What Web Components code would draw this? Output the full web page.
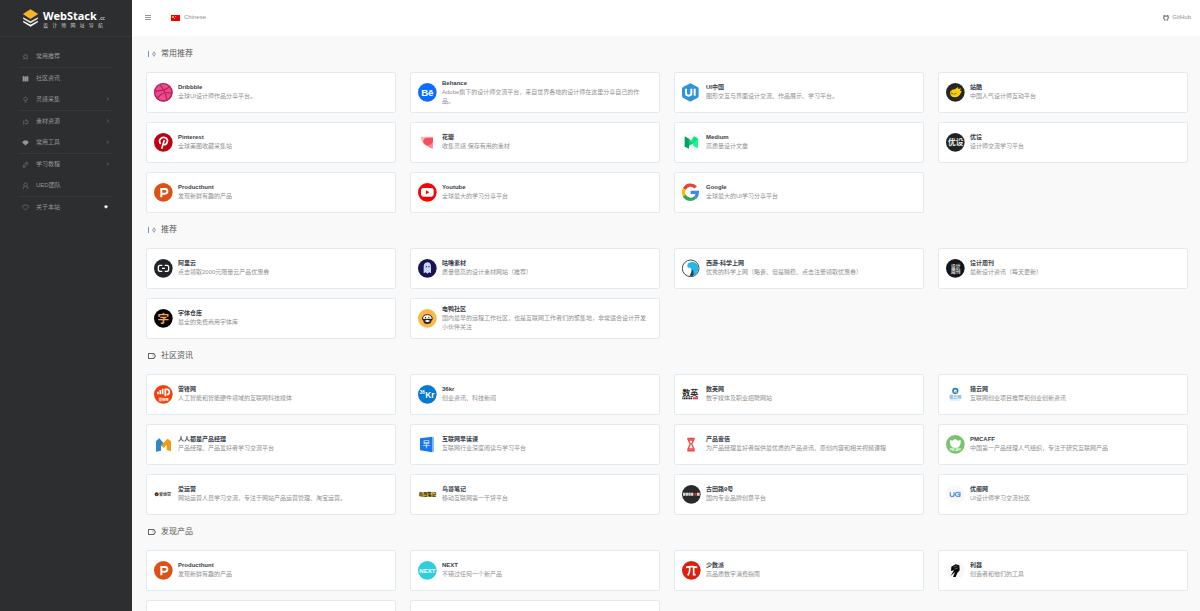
<!DOCTYPE html>
<html lang="zh">
<head>
<meta charset="utf-8">
<title>WebStack.cc</title>
<style>
body { margin: 0; background: #f9f9f9; color: #8f9091; font: 6px/9px "Liberation Sans", "Noto Sans CJK SC", sans-serif; }
</style>
</head>
<body>
<ws-app>
  <ws-sidebar slot="sidebar">
    <ws-nav-item icon="star">常用推荐</ws-nav-item>
    <ws-nav-item icon="doc">社区资讯</ws-nav-item>
    <ws-nav-item icon="bulb" more>灵感采集</ws-nav-item>
    <ws-nav-item icon="thumb" more>素材资源</ws-nav-item>
    <ws-nav-item icon="diamond" more>常用工具</ws-nav-item>
    <ws-nav-item icon="pencil" more>学习教程</ws-nav-item>
    <ws-nav-item icon="user">UED团队</ws-nav-item>
    <ws-nav-item icon="heart" loved>关于本站</ws-nav-item>
  </ws-sidebar>
  <ws-topbar></ws-topbar>
  <ws-section icon="split"><span slot="title">常用推荐</span>
    <ws-card logo="dribbble"><b slot="name">Dribbble</b>全球UI设计师作品分享平台。</ws-card>
    <ws-card logo="behance"><b slot="name">Behance</b>Adobe旗下的设计师交流平台，来自世界各地的设计师在这里分享自己的作品。</ws-card>
    <ws-card logo="uicn"><b slot="name">UI中国</b>图形交互与界面设计交流、作品展示、学习平台。</ws-card>
    <ws-card logo="zcool"><b slot="name">站酷</b>中国人气设计师互动平台</ws-card>
    <ws-card logo="pinterest"><b slot="name">Pinterest</b>全球美图收藏采集站</ws-card>
    <ws-card logo="huaban"><b slot="name">花瓣</b>收集灵感,保存有用的素材</ws-card>
    <ws-card logo="medium"><b slot="name">Medium</b>高质量设计文章</ws-card>
    <ws-card logo="uisdc"><b slot="name">优设</b>设计师交流学习平台</ws-card>
    <ws-card logo="producthunt"><b slot="name">Producthunt</b>发现新鲜有趣的产品</ws-card>
    <ws-card logo="youtube"><b slot="name">Youtube</b>全球最大的学习分享平台</ws-card>
    <ws-card logo="google"><b slot="name">Google</b>全球最大的UI学习分享平台</ws-card>
  </ws-section>
  <ws-section icon="split"><span slot="title">推荐</span>
    <ws-card logo="aliyun"><b slot="name">阿里云</b>点击领取2000元限量云产品优惠券</ws-card>
    <ws-card logo="gulu"><b slot="name">咕噜素材</b>质量很高的设计素材网站（推荐）</ws-card>
    <ws-card logo="xiyou"><b slot="name">西游-科学上网</b>优秀的科学上网（略贵、但是贼稳、点击注册领取优惠券）</ws-card>
    <ws-card logo="weekly"><b slot="name">设计周刊</b>最新设计资讯（每天更新）</ws-card>
    <ws-card logo="ziti"><b slot="name">字体仓库</b>最全的免费商用字体库</ws-card>
    <ws-card logo="dianya"><b slot="name">电鸭社区</b>国内最早的远程工作社区，也是互联网工作者们的聚集地，非常适合设计开发小伙伴关注</ws-card>
  </ws-section>
  <ws-section icon="tag"><span slot="title">社区资讯</span>
    <ws-card logo="leiphone"><b slot="name">雷锋网</b>人工智能和智能硬件领域的互联网科技媒体</ws-card>
    <ws-card logo="kr"><b slot="name">36kr</b>创业资讯、科技新闻</ws-card>
    <ws-card logo="digitaling"><b slot="name">数英网</b>数字媒体及职业招聘网站</ws-card>
    <ws-card logo="lieyun"><b slot="name">猎云网</b>互联网创业项目推荐和创业创新资讯</ws-card>
    <ws-card logo="woshipm"><b slot="name">人人都是产品经理</b>产品经理、产品爱好者学习交流平台</ws-card>
    <ws-card logo="zaodu"><b slot="name">互联网早读课</b>互联网行业深度阅读与学习平台</ws-card>
    <ws-card logo="chanpin"><b slot="name">产品壹佰</b>为产品经理爱好者提供最优质的产品资讯、原创内容和相关视频课程</ws-card>
    <ws-card logo="pmcaff"><b slot="name">PMCAFF</b>中国第一产品经理人气组织，专注于研究互联网产品</ws-card>
    <ws-card logo="iyunying"><b slot="name">爱运营</b>网站运营人员学习交流，专注于网站产品运营管理、淘宝运营。</ws-card>
    <ws-card logo="niaoge"><b slot="name">鸟哥笔记</b>移动互联网第一干货平台</ws-card>
    <ws-card logo="gtn9"><b slot="name">古田路9号</b>国内专业品牌创意平台</ws-card>
    <ws-card logo="uigreat"><b slot="name">优阁网</b>UI设计师学习交流社区</ws-card>
  </ws-section>
  <ws-section icon="tag"><span slot="title">发现产品</span>
    <ws-card logo="producthunt"><b slot="name">Producthunt</b>发现新鲜有趣的产品</ws-card>
    <ws-card logo="next"><b slot="name">NEXT</b>不错过任何一个新产品</ws-card>
    <ws-card logo="sspai"><b slot="name">少数派</b>高品质数字消费指南</ws-card>
    <ws-card logo="liqi"><b slot="name">利器</b>创造者和他们的工具</ws-card>
    <ws-card></ws-card>
    <ws-card></ws-card>
  </ws-section>
</ws-app>

<script>
const disc = (fill, inner = '') => `<circle cx="28" cy="28" r="28" fill="${fill}"/>${inner}`;
const word = (x, y, size, fill, text, extra = '') =>
  `<text x="${x}" y="${y}" font-size="${size}" fill="${fill}" text-anchor="middle" font-weight="bold" ${extra}>${text}</text>`;

const LOGOS = {
  dribbble: disc('#ea4c89', '<g fill="none" stroke="#b92362" stroke-width="4"><circle cx="28" cy="28" r="26"/><path d="M17 4C30 18 36 34 39 52M2 24C22 25 38 20 48 10M10 47C18 31 36 26 55 31"/></g>'),
  behance: disc('#0b6cff', word(28, 38, 29, '#fff', 'Bē')),
  uicn: '<path d="M25 1L47 12Q50 14 50 18V38Q50 42 47 44L28 55Q25 56 22 55L3 44Q0 42 0 38V18Q0 14 3 12Z" fill="#2f93db"/><path d="M12 17V31Q12 38 20 38T28 31V17M38 17V38" fill="none" stroke="#fff" stroke-width="6"/>',
  zcool: disc('#262626', '<path d="M12 31Q12 20 27 19L36 12 37 18 45 16 42 24 47 23Q43 41 28 43 14 44 12 31Z" fill="#f7cf05"/><path d="M15 30l7 3M25 33l6-2" stroke="#262626" stroke-width="2"/>'),
  pinterest: disc('#bd0213', '<path d="M20 33Q13 24 20 17 27 11 36 15 43 20 39 29 36 37 28 34M31 21L23 47" fill="none" stroke="#fff" stroke-width="5"/>'),
  huaban: '<path d="M8 11H45V47Q34 46 28 39 11 35 8 11Z" fill="#fbb6ba"/><path d="M16 28Q13 14 31 14H45V26Q41 38 31 39 21 38 16 28Z" fill="#f4505b"/><path d="M29 38Q39 37 44 27V46Q34 45 29 38Z" fill="#f9868f"/>',
  medium: disc('#f7f9f9', '<path d="M8 10L21 17V47L8 41Z" fill="#02a365"/><path d="M21 17L34 31 21 39Z" fill="#12c778"/><path d="M27 23L36 10 47 16V41L34 34Z" fill="#08e47e"/><path d="M47 16V46L34 39V32Z" fill="#14f889"/>'),
  uisdc: disc('#202222', word(29, 37, 23, '#eee', '优设')),
  producthunt: disc('#dc5216', '<path d="M22 43V18H33A7 7 0 0 1 33 32H22" fill="none" stroke="#fff" stroke-width="6"/>'),
  youtube: disc('#fd0002', '<rect x="9" y="15" width="38" height="26" rx="7" fill="#fff"/><path d="M24 22L34 28 24 34Z" fill="#fd0002"/>'),
  google: '<g fill="none" stroke-width="10"><path d="M7 18A21 21 0 0 1 41 13" stroke="#ea4335"/><path d="M8 39A21 21 0 0 1 7 18" stroke="#fbbc05"/><path d="M40 43A21 21 0 0 1 7 38" stroke="#34a853"/><path d="M26 28H46Q46 38 40 44" stroke="#4285f4"/></g>',
  aliyun: disc('#202327', '<path d="M25 19H18Q13 19 13 25V31Q13 37 18 37H25M32 19H39Q44 19 44 25V31Q44 37 39 37H32M24 28H33" fill="none" stroke="#fff" stroke-width="4"/>'),
  gulu: disc('#181452', '<path d="M17 43V20Q20 10 29 10T39 22V43L34 40 28 44 23 40Z" fill="#c5d8f8"/><circle cx="25" cy="23" r="2" fill="#181452"/><circle cx="33" cy="23" r="2" fill="#181452"/>'),
  xiyou: '<circle cx="26" cy="28" r="25" fill="#fff" stroke="#414852" stroke-width="3"/><path d="M20 12Q38 3 48 20L49 34 40 49 30 51Q35 34 25 26 13 29 17 16Z" fill="#23b8e7"/><path d="M29 30Q37 36 34 50L23 51Q29 40 29 30Z" fill="#244156"/>',
  weekly: disc('#151619', word(29, 27, 14, '#eee', '设计') + word(29, 43, 14, '#eee', '周刊')),
  ziti: disc('#050301', word(28, 41, 35, '#f2a454', '字')),
  dianya: disc('#f9b947', '<path d="M13 31Q14 17 28 17T43 31Z" fill="#fff" stroke="#292321" stroke-width="3"/><path d="M14 30H43L38 42Q28 48 18 42Z" fill="#292321"/><path d="M21 26h3M31 26h3" stroke="#292321" stroke-width="4"/><path d="M20 36Q28 30 37 36L28 40Z" fill="#fff"/>'),
  leiphone: disc('#f0410c', '<path d="M12 28V20M19 28V15M26 28V11M34 34V13H39Q46 13 46 21T38 29" fill="none" stroke="#fff" stroke-width="5"/>' + word(29, 49, 10, '#fff', '雷锋网')),
  kr: disc('#0879d3', word(13, 27, 14, '#fff', '36') + word(36, 40, 25, '#fff', 'Kr')),
  digitaling: word(25, 33, 24, '#292929', '数英') + '<path d="M1 40H30" stroke="#292929" stroke-width="5" stroke-dasharray="4 1"/><path d="M32 40H48" stroke="#ef3455" stroke-width="6"/>',
  lieyun: '<circle cx="28" cy="18" r="7" fill="none" stroke="#2184c9" stroke-width="5"/><path d="M27 19L34 25" stroke="#f3a12c" stroke-width="4"/>' + word(28, 42, 12, '#65b1df', '猎云网') + '<path d="M13 45H43" stroke="#cce4f4" stroke-width="3"/>',
  woshipm: '<path d="M6 18L16 10 29 25V38L21 31V47L6 50Z" fill="#2e87c8"/><path d="M21 31L41 11 51 19V49L38 45V29L29 38Z" fill="#f39a12"/>',
  zaodu: '<path d="M43 7H48V50L43 51Z" fill="#8dbcf5"/><path d="M6 10L43 5V52L6 46Z" fill="#1677ef"/>' + word(25, 37, 23, '#fff', '早', 'style="font-weight:400"'),
  chanpin: '<path d="M16 11H38M16 47H38" stroke="#ef4445" stroke-width="5"/><path d="M19 15H35L29 27 36 42H18L25 27Z" fill="none" stroke="#ef4445" stroke-width="4"/>',
  pmcaff: disc('#76c46c', '<path d="M12 15L19 17 27 12 37 17 44 14Q45 34 35 38H21Q10 32 12 15Z" fill="#fff"/>' + word(28, 47, 8, '#fff', 'PMCAFF')),
  iyunying: '<circle cx="8" cy="28" r="6" fill="#39332c"/><circle cx="8" cy="29" r="2" fill="#ef8a22"/>' + word(33, 33, 12, '#4b4c50', '爱运营'),
  niaoge: '<path d="M1 26Q28 18 55 24V32L48 36H5Z" fill="#edc52a"/>' + word(28, 34, 13, '#211c16', '鸟哥笔记'),
  gtn9: disc('#292b2b', '<path d="M3 28H34M45 28H54" stroke="#d7d9d8" stroke-width="9" stroke-dasharray="7 1"/><path d="M37 28H44" stroke="#e02e23" stroke-width="8"/>'),
  uigreat: disc('#f8f8fa', '<path d="M13 22V30Q13 35 18 35T24 30V22M40 22H32Q28 23 28 28T33 34H41V28H35M42 22V34" fill="none" stroke="#5c98ee" stroke-width="4"/>'),
  next: disc('#30cddd', word(28, 35, 18, '#fff', 'NEXT')),
  sspai: disc('#d9210f', '<path d="M12 19Q28 15 46 19M23 19Q24 35 17 43M35 19V41H41" fill="none" stroke="#fff" stroke-width="5"/>'),
  liqi: disc('#f8f8f8', '<path d="M16 17L29 10 40 13 41 28 34 36 29 48H21L27 33 14 45 24 28 15 30Z" fill="#090909"/><path d="M23 18L34 15M25 24L36 21" stroke="#f8f8f8" stroke-width="1"/>')
};

const NAV_ICONS = {
  star: '<path d="M8 2L10 6 14 7 11 10 12 14 8 12 4 14 5 10 2 7 6 6Z"/>',
  doc: '<path d="M2 3H5V14H2ZM6 4H10V14H6ZM11 3H14V14H11Z" fill="currentColor"/>',
  bulb: '<path d="M6 11Q3 8 4 5 8 0 12 5 13 8 10 11ZM6 14H10"/>',
  thumb: '<path d="M2 7H4V14H2M6 13H13L14 7H10V3L6 7"/>',
  diamond: '<path d="M4 4H12L15 8 8 14 1 8Z" fill="currentColor"/>',
  pencil: '<path d="M3 13L4 9 11 2 14 5 7 12ZM9 4L12 7M2 14H8"/>',
  user: '<path d="M8 2Q12 2 12 6T8 10 4 6 8 2M2 14Q2 11 6 10M10 10Q14 11 14 14H11M2 14H5"/>',
  heart: '<path d="M8 14L2 8Q0 4 4 2 7 1 8 4 9 1 12 2 16 4 14 8Z"/>'
};

const HEAD_ICONS = {
  split: '<path d="M1 1H2V7H1Z" fill="#5a9bd8"/><path d="M7 1L9 4 7 7 5 4Z" fill="#a3a6a8"/><path d="M7 3L8 4 7 5 6 4Z" fill="#f9f9f9"/>',
  tag: '<path d="M1 1H7L9 4 7 7H1ZM2 2V6H6L8 4 6 2Z" fill="#666" fill-rule="evenodd"/><path d="M5 3H6V4H5Z" fill="#7ab2dd"/>'
};

function define(name, render) {
  customElements.define(name, class extends HTMLElement {
    constructor() {
      super();
      this.attachShadow({ mode: 'open' });
    }
    connectedCallback() {
      const template = document.createElement('template');
      template.innerHTML = render(this);
      this.shadowRoot.replaceChildren(template.content.cloneNode(true));
    }
  });
}

define('ws-app', () => `
  <style>
    :host { display: grid; grid-template-columns: 132px minmax(0, 1fr); height: 100vh; overflow: hidden; }
    main { overflow-y: auto; scrollbar-width: none; padding-bottom: 12px; }
  </style>
  <slot name="sidebar"></slot>
  <main><slot></slot></main>`);

define('ws-sidebar', () => `
  <style>
    :host { display: block; background: #2c2e2f; color: #979898; }
    .logo { display: flex; align-items: center; gap: 4px; height: 36px; padding-left: 22px; border-bottom: 1px solid #363839; color: #fff; text-decoration: none; }
    .mark { width: 17px; height: 18px; }
    .words { width: 60px; }
    .name { display: flex; align-items: baseline; gap: 2px; font: bold 11px/13px "Noto Sans", sans-serif; }
    .name small { font: 5px/5px "Noto Sans", sans-serif; }
    .sub { display: flex; justify-content: space-between; font-size: 5px; line-height: 6px; color: #ccc; }
    nav { display: block; padding: 9px 19px; }
    ::slotted(:nth-child(odd)) { border-bottom: 1px solid #37393a; }
  </style>
  <a class="logo" href="#">
    <svg class="mark" viewBox="0 0 48 54"><path d="M2 35L24 47 46 35V40L24 53 2 40Z" fill="#fff"/><path d="M2 25L24 37 46 25V30L24 43 2 30Z" fill="#ddd"/><path d="M24 1L47 15 24 30 1 15Z" fill="#fcb322"/></svg>
    <span class="words"><span class="name">WebStack<small>.cc</small></span>
    <span class="sub">${[...'设计师网址导航'].map(c => `<span>${c}</span>`).join('')}</span></span>
  </a>
  <nav><slot></slot></nav>`);

define('ws-nav-item', el => `
  <style>
    :host { display: block; }
    a { display: flex; align-items: center; gap: 7px; box-sizing: border-box; height: 21px; padding: 0 3px 1px; color: inherit; text-decoration: none; }
    svg { width: 7px; height: 7px; fill: none; stroke: currentColor; stroke-width: 1; }
    .label { flex: 1; }
    .chevron { width: 4px; height: 4px; }
    .love { color: #fff; fill: currentColor; width: 4px; height: 4px; margin-right: 2px; }
  </style>
  <a href="#"><svg viewBox="0 0 16 16">${NAV_ICONS[el.getAttribute('icon')]}</svg>
  <span class="label"><slot></slot></span>
  ${el.hasAttribute('more') ? '<svg class="chevron" viewBox="0 0 8 8"><path d="M2 1L5 4 2 7"/></svg>' : ''}
  ${el.hasAttribute('loved') ? `<svg class="love" viewBox="0 0 16 16">${NAV_ICONS.heart}</svg>` : ''}</a>`);

define('ws-topbar', () => `
  <style>
    :host { display: flex; align-items: center; box-sizing: border-box; height: 36px; padding: 0 9px 1px 13px; margin-bottom: 1px; background: #fff; }
    button { display: flex; padding: 0; border: 0; background: none; }
    a { display: flex; align-items: center; gap: 3px; color: inherit; text-decoration: none; }
    .lang { gap: 4px; margin-left: 20px; }
    .hub { margin-left: auto; }
  </style>
  <button aria-label="菜单"><svg width="6" height="5" viewBox="0 0 6 5"><path d="M0 0H6V1H0ZM0 2H6V3H0ZM0 4H6V5H0Z" fill="#979898"/></svg></button>
  <a class="lang" href="#"><svg width="9" height="6" viewBox="0 0 9 6"><path d="M0 0H9V6H0Z" fill="#e60012"/><path d="M1 1H3V3H1ZM4 1H5V2H4ZM3 3H4V4H3Z" fill="#f7a01b"/></svg>Chinese</a>
  <a class="hub" href="#"><svg width="6" height="6" viewBox="0 0 16 16"><path d="M5 15V12Q1 10 2 5L3 1 6 3H10L13 1 14 5Q15 10 11 12V15" fill="none" stroke="#777" stroke-width="3"/></svg>GitHub</a>`);

define('ws-section', el => `
  <style>
    :host { display: block; padding: 10px 12px 0 14px; }
    h4 { display: flex; align-items: center; gap: 5px; margin: 0 0 12px; padding-left: 1px; color: #555; font-size: 8px; line-height: 13px; font-weight: 400; }
    svg { width: 9px; height: 8px; fill: none; }
    .grid { display: grid; grid-template-columns: repeat(4, minmax(0, 1fr)); gap: 9px 14px; }
  </style>
  <h4><svg viewBox="0 0 9 8">${HEAD_ICONS[el.getAttribute('icon')]}</svg><slot name="title"></slot></h4>
  <div class="grid"><slot></slot></div>`);

define('ws-card', el => `
  <style>
    :host { display: block; }
    a { display: flex; align-items: center; gap: 5px; box-sizing: border-box; min-height: 41px; padding: 0 10px 0 7px; background: #fff; border: 1px solid #e0eaf3; border-radius: 2px; color: inherit; text-decoration: none; }
    svg { flex: none; width: 19px; height: 19px; }
    .text { padding-bottom: 1px; }
    .name { display: block; color: #373e4a; }
    p { margin: 0; }
  </style>
  <a href="#"><svg viewBox="0 0 57 57">${LOGOS[el.getAttribute('logo')] || ''}</svg>
  <div class="text"><span class="name"><slot name="name"></slot></span><p><slot></slot></p></div></a>`);
</script>
</body>
</html>
